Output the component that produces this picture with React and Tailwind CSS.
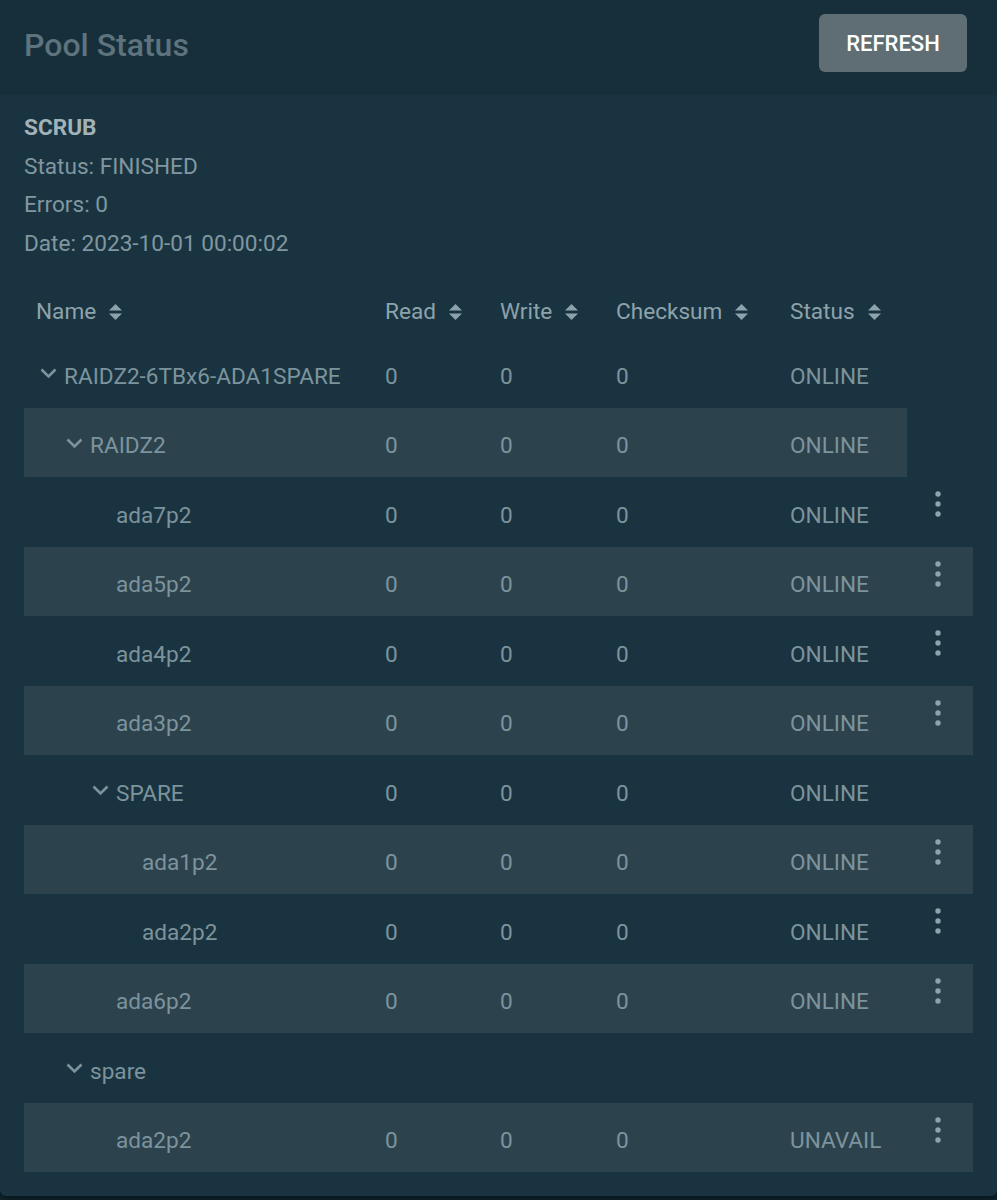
import React from 'react';

const rows = [
  { name: 'RAIDZ2-6TBx6-ADA1SPARE', level: 0, group: true, read: '0', write: '0', checksum: '0', status: 'ONLINE' },
  { name: 'RAIDZ2', level: 1, group: true, read: '0', write: '0', checksum: '0', status: 'ONLINE' },
  { name: 'ada7p2', level: 2, read: '0', write: '0', checksum: '0', status: 'ONLINE', menu: true },
  { name: 'ada5p2', level: 2, read: '0', write: '0', checksum: '0', status: 'ONLINE', menu: true },
  { name: 'ada4p2', level: 2, read: '0', write: '0', checksum: '0', status: 'ONLINE', menu: true },
  { name: 'ada3p2', level: 2, read: '0', write: '0', checksum: '0', status: 'ONLINE', menu: true },
  { name: 'SPARE', level: 2, group: true, read: '0', write: '0', checksum: '0', status: 'ONLINE' },
  { name: 'ada1p2', level: 3, read: '0', write: '0', checksum: '0', status: 'ONLINE', menu: true },
  { name: 'ada2p2', level: 3, read: '0', write: '0', checksum: '0', status: 'ONLINE', menu: true },
  { name: 'ada6p2', level: 2, read: '0', write: '0', checksum: '0', status: 'ONLINE', menu: true },
  { name: 'spare', level: 1, group: true, read: '', write: '', checksum: '', status: '' },
  { name: 'ada2p2', level: 2, read: '0', write: '0', checksum: '0', status: 'UNAVAIL', menu: true },
];

const indents = ['w-0', 'w-[26px]', 'w-[52px]', 'w-[78px]'];

function SortIcon() {
  return (
    <svg width="15" height="18" viewBox="0 0 15 18" className="ml-3 fill-[#8ea2ab]">
      <path d="M7.5 1 L14 7.6 H1 Z" />
      <path d="M7.5 17 L14 10.4 H1 Z" />
    </svg>
  );
}

function Chevron() {
  return (
    <svg width="17" height="11" viewBox="0 0 17 11" className="ml-1 mb-[6px]">
      <polyline points="1.5,1.5 8.5,8.5 15.5,1.5" fill="none" stroke="#7d939c" strokeWidth="2.6" />
    </svg>
  );
}

function Kebab() {
  return (
    <svg width="10" height="30" viewBox="0 0 10 30" className="ml-[26px] mt-[12px] fill-[#8fa3ac]">
      <circle cx="5" cy="5" r="2.7" />
      <circle cx="5" cy="15" r="2.7" />
      <circle cx="5" cy="25" r="2.7" />
    </svg>
  );
}

export default function App() {
  return (
    <div className="min-h-[1200px] bg-[#10242d] font-['Roboto',_'Liberation_Sans',_sans-serif]">
      <div className="bg-[#193440] rounded-b-md shadow-[0_3px_4px_rgba(0,0,0,0.35)]">
        <div className="h-[95px] bg-[#172f3b] flex items-center justify-between pl-6 pr-[30px]">
          <h1 className="text-[32px] font-medium text-[#5d737d] leading-none mb-[6px]">Pool Status</h1>
          <button className="w-[148px] h-[58px] mb-[9px] rounded-md bg-[#5e6e74] text-white text-[22px] font-medium">
            REFRESH
          </button>
        </div>

        <div className="px-6 pt-[14px] pb-6">
          <div className="text-[22.6px] leading-[38.5px] text-[#8197a0]">
            <div className="font-bold text-[#a3b2b9]">SCRUB</div>
            <div>Status: FINISHED</div>
            <div>Errors: 0</div>
            <div>Date: 2023-10-01 00:00:02</div>
          </div>

          <div className="mt-[14px] text-[22.6px] text-[#7d939c]">
            <div className="flex h-[61px] pt-2 text-[#8ea2ab]">
              <div className="w-[349px] pl-3 flex items-center">Name<SortIcon /></div>
              <div className="w-[115px] pl-3 flex items-center">Read<SortIcon /></div>
              <div className="w-[116px] pl-3 flex items-center">Write<SortIcon /></div>
              <div className="w-[174px] pl-3 flex items-center">Checksum<SortIcon /></div>
              <div className="w-[129px] pl-3 flex items-center">Status<SortIcon /></div>
            </div>

            {rows.map((r, i) => {
              const bg = i % 2 === 1 ? 'bg-[#2c434e]' : '';
              const cell = `h-[69.5px] pt-2 pl-3 flex items-center ${bg}`;
              return (
                <div key={i} className="flex">
                  <div className={`w-[349px] ${cell}`}>
                    <div className={indents[r.level]} />
                    <div className="w-[28px] flex items-center">{r.group && <Chevron />}</div>
                    <span>{r.name}</span>
                  </div>
                  <div className={`w-[115px] ${cell}`}>{r.read}</div>
                  <div className={`w-[116px] ${cell}`}>{r.write}</div>
                  <div className={`w-[174px] ${cell}`}>{r.checksum}</div>
                  <div className={`w-[129px] ${cell}`}>{r.status}</div>
                  {r.menu && (
                    <div className={`w-[66px] h-[69.5px] flex items-start ${bg}`}>
                      <Kebab />
                    </div>
                  )}
                </div>
              );
            })}
          </div>
        </div>
      </div>
    </div>
  );
}
